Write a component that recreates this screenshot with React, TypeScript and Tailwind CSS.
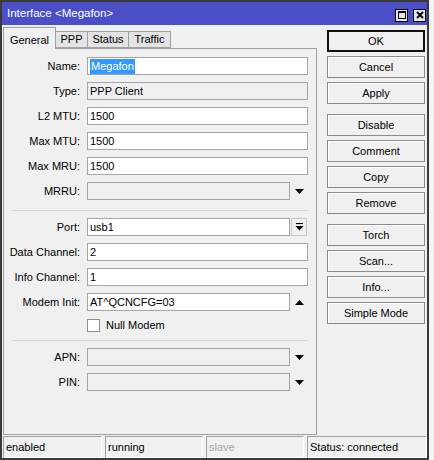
import type { ReactNode } from 'react'

const font = "font-['Liberation_Sans',Arial,sans-serif]"

function DownArrow() {
  return (
    <svg width="9" height="5" viewBox="0 0 9 5" className="block">
      <path d="M0 0H9L4.5 5Z" fill="#000" />
    </svg>
  )
}

function UpArrow() {
  return (
    <svg width="9" height="5" viewBox="0 0 9 5" className="block">
      <path d="M0 5H9L4.5 0Z" fill="#000" />
    </svg>
  )
}

function Row({ label, children }: { label: string; children: ReactNode }) {
  return (
    <div className="flex h-[18px] items-center">
      <span className="w-[76px] shrink-0 text-right">{label}</span>
      <div className="ml-[7px] flex h-full items-center">{children}</div>
    </div>
  )
}

function Field({
  value,
  disabled,
  short,
}: {
  value?: ReactNode
  disabled?: boolean
  short?: boolean
}) {
  return (
    <div
      className={`flex h-[18px] items-center border border-[#a5a5a5] pl-[2px] ${
        short ? 'w-[203px]' : 'w-[221px]'
      } ${disabled ? 'bg-[#f0f0f0]' : 'bg-white'}`}
    >
      {value}
    </div>
  )
}

function Arrow({ children }: { children: ReactNode }) {
  return <div className="flex w-[18px] items-center justify-center">{children}</div>
}

function Btn({ label, primary, className = '' }: { label: string; primary?: boolean; className?: string }) {
  return (
    <div
      className={`flex h-[22px] items-center justify-center bg-[#f0f0f0] ${
        primary ? 'border-2 border-[#111]' : 'border border-[#8a8a8a] shadow-[inset_1px_1px_0_#fff]'
      } ${className}`}
    >
      {label}
    </div>
  )
}

export default function App() {
  return (
    <div className={`h-[460px] w-[434px] bg-[#f4f4f4] text-[11px] text-black ${font}`}>
      <div className="flex h-[460px] w-[429px] flex-col border-2 border-[#3a3a3a] bg-[#f0f0f0]">
        {/* title bar */}
        <div className="flex h-[23px] shrink-0 items-center bg-[#4b4fc7] pl-[5px] pr-[1px] text-white">
          <span className="flex-1 text-[11.5px]">Interface &lt;Megafon&gt;</span>
          <div className="flex gap-[5px] pt-[3px]">
            <div className="flex h-[13px] w-[13px] items-center justify-center border border-black bg-[#e6e6e6]">
              <div className="h-[8px] w-[8px] border border-black border-t-2" />
            </div>
            <div className="flex h-[13px] w-[13px] items-center justify-center border border-black bg-[#e6e6e6]">
              <svg width="8" height="8" viewBox="0 0 8 8">
                <path d="M1 1L7 7M7 1L1 7" stroke="#000" strokeWidth="1.8" />
              </svg>
            </div>
          </div>
        </div>

        {/* body */}
        <div className="flex h-[410px] shrink-0">
          <div className="ml-px flex w-[314px] flex-col">
            <div className="flex h-[23px] items-end">
              <div className="relative top-px flex h-[22px] w-[53px] items-start justify-center border border-b-0 border-[#a0a0a0] bg-[#f0f0f0] pt-[4px]">
                General
              </div>
              <div className="flex h-[17px] w-[32px] items-center justify-center border border-l-0 border-[#a0a0a0] bg-[#e3e3e3] pb-px">
                PPP
              </div>
              <div className="flex h-[17px] w-[41px] items-center justify-center border border-l-0 border-[#a0a0a0] bg-[#e3e3e3] pb-px">
                Status
              </div>
              <div className="flex h-[17px] w-[42px] items-center justify-center border border-l-0 border-[#a0a0a0] bg-[#e3e3e3] pb-px">
                Traffic
              </div>
            </div>
            <div className="flex h-[387px] flex-col gap-[7px] border border-[#a0a0a0] pt-[8px]">
              <Row label="Name:">
                <Field
                  value={<span className="bg-[#3399ff] px-px leading-[15px] text-white">Megafon</span>}
                />
              </Row>
              <Row label="Type:">
                <Field value="PPP Client" disabled />
              </Row>
              <Row label="L2 MTU:">
                <Field value="1500" />
              </Row>
              <Row label="Max MTU:">
                <Field value="1500" />
              </Row>
              <Row label="Max MRU:">
                <Field value="1500" />
              </Row>
              <Row label="MRRU:">
                <Field disabled short />
                <Arrow>
                  <DownArrow />
                </Arrow>
              </Row>
              <div className="mx-[8px] mt-[3px] h-px bg-[#d4d4d4]" />
              <Row label="Port:">
                <Field value="usb1" short />
                <div className="ml-px flex h-[18px] w-[16px] items-center justify-center border border-[#c8c8c8] bg-[#f0f0f0]">
                  <svg width="9" height="8" viewBox="0 0 9 8">
                    <path d="M1 0.5H8" stroke="#000" strokeWidth="1.2" />
                    <path d="M0.5 3H8.5L4.5 7.5Z" fill="#000" />
                  </svg>
                </div>
              </Row>
              <Row label="Data Channel:">
                <Field value="2" />
              </Row>
              <Row label="Info Channel:">
                <Field value="1" />
              </Row>
              <Row label="Modem Init:">
                <Field value="AT^QCNCFG=03" short />
                <Arrow>
                  <UpArrow />
                </Arrow>
              </Row>
              <div className="ml-[83px] mt-px flex h-[13px] items-center gap-[6px]">
                <div className="h-[13px] w-[13px] border border-[#8f8f8f] bg-white" />
                <span>Null Modem</span>
              </div>
              <div className="mx-[8px] mt-px h-px bg-[#d4d4d4]" />
              <Row label="APN:">
                <Field disabled short />
                <Arrow>
                  <DownArrow />
                </Arrow>
              </Row>
              <Row label="PIN:">
                <Field disabled short />
                <Arrow>
                  <DownArrow />
                </Arrow>
              </Row>
            </div>
          </div>

          <div className="ml-[10px] flex w-[98px] flex-col gap-[4px] pt-[5px]">
            <Btn label="OK" primary />
            <Btn label="Cancel" />
            <Btn label="Apply" />
            <Btn label="Disable" className="mt-[6px]" />
            <Btn label="Comment" />
            <Btn label="Copy" />
            <Btn label="Remove" />
            <Btn label="Torch" className="mt-[6px]" />
            <Btn label="Scan..." />
            <Btn label="Info..." />
            <Btn label="Simple Mode" />
          </div>
        </div>

        {/* status bar */}
        <div className="flex h-[23px] shrink-0 gap-[3px] pl-px pt-px">
          <div className="flex h-[22px] w-[99px] items-center border border-[#a0a0a0] border-b-white border-r-white pl-[2px]">
            enabled
          </div>
          <div className="flex h-[22px] w-[98px] items-center border border-[#a0a0a0] border-b-white border-r-white pl-[2px]">
            running
          </div>
          <div className="flex h-[22px] w-[98px] items-center border border-[#a0a0a0] border-b-white border-r-white pl-[2px] text-[#a8a8a8]">
            slave
          </div>
          <div className="flex h-[22px] w-[120px] items-center border border-[#a0a0a0] border-b-white border-r-white pl-[2px]">
            Status: connected
          </div>
        </div>
      </div>
    </div>
  )
}
